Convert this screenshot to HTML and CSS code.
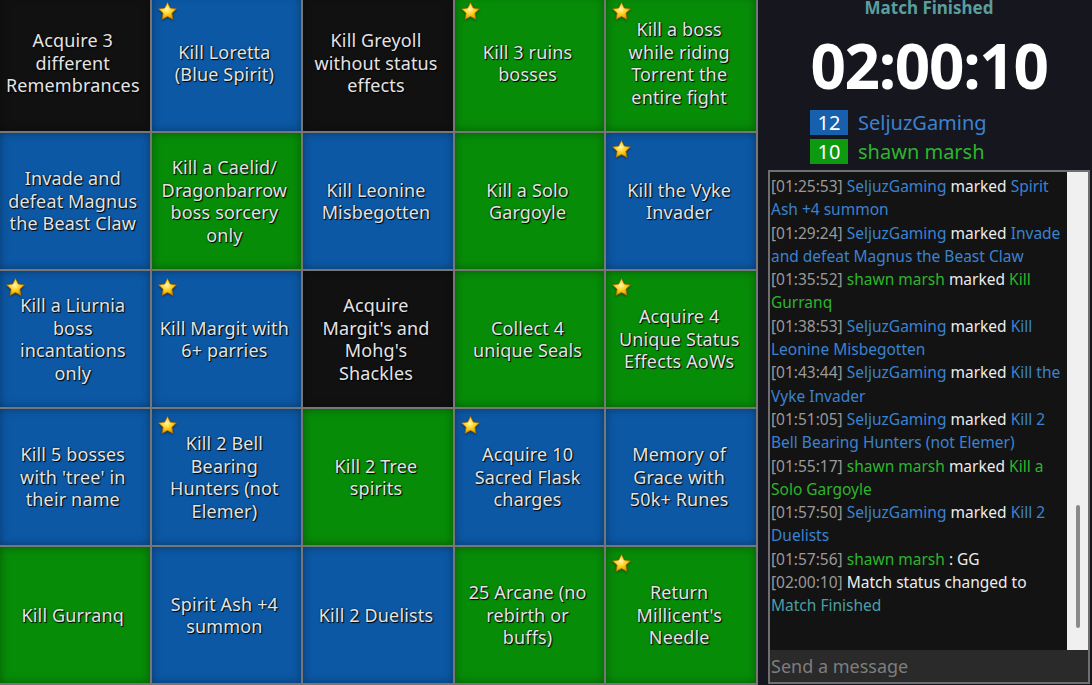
FILE: index.html
```html
<!DOCTYPE html>
<html>
<head>
<meta charset="utf-8">
<title>Bingo</title>
<link rel="stylesheet" href="styles.css">
</head>
<body>
<svg class="defs" width="0" height="0" aria-hidden="true">
  <defs>
    <radialGradient id="gold" cx="45%" cy="40%" r="65%">
      <stop offset="0" stop-color="#fff6b8"/>
      <stop offset="0.45" stop-color="#ffd11a"/>
      <stop offset="1" stop-color="#d98a00"/>
    </radialGradient>
    <path id="star" d="M12 1.6l3.1 6.5 7.1 1-5.2 4.9 1.3 7.1L12 17.7l-6.3 3.4 1.3-7.1-5.2-4.9 7.1-1z"/>
  </defs>
</svg>
<div class="page">
  <main class="board">
    <div class="cell black"><span>Acquire 3<br>different<br>Remembrances</span></div>
    <div class="cell blue"><svg class="star" viewBox="0 0 24 24"><use href="#star"/></svg><span>Kill Loretta<br>(Blue Spirit)</span></div>
    <div class="cell black"><span>Kill Greyoll<br>without status<br>effects</span></div>
    <div class="cell green"><svg class="star" viewBox="0 0 24 24"><use href="#star"/></svg><span>Kill 3 ruins<br>bosses</span></div>
    <div class="cell green"><svg class="star" viewBox="0 0 24 24"><use href="#star"/></svg><span>Kill a boss<br>while riding<br>Torrent the<br>entire fight</span></div>

    <div class="cell blue"><span>Invade and<br>defeat Magnus<br>the Beast Claw</span></div>
    <div class="cell green"><span>Kill a Caelid/<br>Dragonbarrow<br>boss sorcery<br>only</span></div>
    <div class="cell blue"><span>Kill Leonine<br>Misbegotten</span></div>
    <div class="cell green"><span>Kill a Solo<br>Gargoyle</span></div>
    <div class="cell blue"><svg class="star" viewBox="0 0 24 24"><use href="#star"/></svg><span>Kill the Vyke<br>Invader</span></div>

    <div class="cell blue"><svg class="star" viewBox="0 0 24 24"><use href="#star"/></svg><span>Kill a Liurnia<br>boss<br>incantations<br>only</span></div>
    <div class="cell blue"><svg class="star" viewBox="0 0 24 24"><use href="#star"/></svg><span>Kill Margit with<br>6+ parries</span></div>
    <div class="cell black"><span>Acquire<br>Margit's and<br>Mohg's<br>Shackles</span></div>
    <div class="cell green"><span>Collect 4<br>unique Seals</span></div>
    <div class="cell green"><svg class="star" viewBox="0 0 24 24"><use href="#star"/></svg><span>Acquire 4<br>Unique Status<br>Effects AoWs</span></div>

    <div class="cell blue"><span>Kill 5 bosses<br>with 'tree' in<br>their name</span></div>
    <div class="cell blue"><svg class="star" viewBox="0 0 24 24"><use href="#star"/></svg><span>Kill 2 Bell<br>Bearing<br>Hunters (not<br>Elemer)</span></div>
    <div class="cell green"><span>Kill 2 Tree<br>spirits</span></div>
    <div class="cell blue"><svg class="star" viewBox="0 0 24 24"><use href="#star"/></svg><span>Acquire 10<br>Sacred Flask<br>charges</span></div>
    <div class="cell blue"><span>Memory of<br>Grace with<br>50k+ Runes</span></div>

    <div class="cell green"><span>Kill Gurranq</span></div>
    <div class="cell blue"><span>Spirit Ash +4<br>summon</span></div>
    <div class="cell blue"><span>Kill 2 Duelists</span></div>
    <div class="cell green"><span>25 Arcane (no<br>rebirth or<br>buffs)</span></div>
    <div class="cell green"><svg class="star" viewBox="0 0 24 24"><use href="#star"/></svg><span>Return<br>Millicent's<br>Needle</span></div>
  </main>

  <aside class="sidebar">
    <div class="status">Match Finished</div>
    <div class="timer">02:00:10</div>
    <div class="scores">
      <div class="score"><span class="count c-blue">12</span><span class="name t-blue">SeljuzGaming</span></div>
      <div class="score"><span class="count c-green">10</span><span class="name t-green">shawn marsh</span></div>
    </div>
    <section class="chat">
      <div class="log">
        <div class="messages">
          <p><span class="ts">[01:25:53]</span> <span class="t-blue">SeljuzGaming</span> <span class="verb">marked</span> <span class="t-blue">Spirit Ash +4 summon</span></p>
          <p><span class="ts">[01:29:24]</span> <span class="t-blue">SeljuzGaming</span> <span class="verb">marked</span> <span class="t-blue">Invade and defeat Magnus the Beast Claw</span></p>
          <p><span class="ts">[01:35:52]</span> <span class="t-green">shawn marsh</span> <span class="verb">marked</span> <span class="t-green">Kill Gurranq</span></p>
          <p><span class="ts">[01:38:53]</span> <span class="t-blue">SeljuzGaming</span> <span class="verb">marked</span> <span class="t-blue">Kill Leonine Misbegotten</span></p>
          <p><span class="ts">[01:43:44]</span> <span class="t-blue">SeljuzGaming</span> <span class="verb">marked</span> <span class="t-blue">Kill the Vyke Invader</span></p>
          <p><span class="ts">[01:51:05]</span> <span class="t-blue">SeljuzGaming</span> <span class="verb">marked</span> <span class="t-blue">Kill 2 Bell Bearing Hunters (not Elemer)</span></p>
          <p><span class="ts">[01:55:17]</span> <span class="t-green">shawn marsh</span> <span class="verb">marked</span> <span class="t-green">Kill a Solo Gargoyle</span></p>
          <p><span class="ts">[01:57:50]</span> <span class="t-blue">SeljuzGaming</span> <span class="verb">marked</span> <span class="t-blue">Kill 2 Duelists</span></p>
          <p><span class="ts">[01:57:56]</span> <span class="t-green">shawn marsh</span> <span class="verb">: GG</span></p>
          <p><span class="ts">[02:00:10]</span> <span class="verb">Match status changed to</span> <span class="t-teal">Match Finished</span></p>
        </div>
        <div class="scrollbar"><div class="thumb"></div></div>
      </div>
      <input class="input" type="text" placeholder="Send a message">
    </section>
  </aside>
</div>
</body>
</html>
```

FILE: styles.css
```css
html, body {
  margin: 0;
  padding: 0;
  height: 100%;
  overflow: hidden;
}
body {
  background: #16161f;
  font-family: "Noto Sans", "Open Sans", sans-serif;
}
.defs {
  position: absolute;
  width: 0;
  height: 0;
}
.page {
  display: flex;
  height: 690px;
  margin-top: -5px;
}

/* board */
.board {
  width: 758px;
  flex: none;
  display: grid;
  grid-template-columns: repeat(5, 1fr);
  grid-auto-rows: 136px;
  gap: 2px;
  padding: 0 2px 2px 0;
  box-sizing: border-box;
  background: #767676;
}
.cell {
  position: relative;
  display: flex;
  align-items: center;
  justify-content: center;
  text-align: center;
  padding: 0 4px 0 0;
  color: #e4e4e4;
  font-size: 18px;
  line-height: 22.5px;
  letter-spacing: 0.15px;
  text-shadow: 1px 1px 1px #000, 0 0 2px rgba(0,0,0,0.6);
  box-shadow: inset 0 0 10px rgba(0,0,0,0.35);
  overflow: hidden;
}
.cell span {
  white-space: nowrap;
}
.black { background: #111111; }
.blue { background: #0c58a5; }
.green { background: #078c08; }
.star {
  position: absolute;
  top: 6px;
  left: 5px;
  width: 21px;
  height: 21px;
  fill: url(#gold);
  stroke: #a86a00;
  stroke-width: 0.8;
  stroke-linejoin: round;
  filter: drop-shadow(0 1px 1px rgba(0,0,0,0.45));
}

/* sidebar */
.sidebar {
  flex: 1;
  min-width: 0;
  display: flex;
  flex-direction: column;
  padding: 1px 2px 1px 10px;
}
.status {
  text-align: center;
  color: #5a9e9d;
  font-weight: 700;
  font-size: 17px;
  line-height: 23px;
}
.timer {
  margin-top: 15px;
  text-align: center;
  color: #ffffff;
  font-weight: 700;
  font-size: 62px;
  line-height: 62px;
  letter-spacing: -1.3px;
}
.scores {
  margin: 14px 0 0 42px;
  display: flex;
  flex-direction: column;
  gap: 4px;
}
.score {
  display: flex;
  align-items: center;
  height: 25px;
  font-size: 20px;
}
.count {
  width: 38px;
  height: 25px;
  line-height: 25px;
  text-align: center;
  color: #fff;
}
.c-blue { background: #1760ad; }
.c-green { background: #0e9a10; }
.name {
  margin-left: 10px;
  line-height: 25px;
}
.t-blue { color: #3b82cf; }
.t-green { color: #2db52d; }
.t-teal { color: #4e9ea6; }

/* chat */
.chat {
  margin-top: 6px;
  flex: 1;
  min-height: 0;
  display: flex;
  flex-direction: column;
  border: 2px solid #6f6f6f;
  background: #131313;
}
.log {
  flex: 1;
  min-height: 0;
  display: flex;
}
.messages {
  flex: 1;
  min-width: 0;
  padding: 3px 0 0 1px;
  overflow: hidden;
  font-size: 15.5px;
  line-height: 23.3px;
}
.messages p {
  margin: 0;
}
.ts { color: #9a9a9a; }
.verb { color: #ececec; }
.scrollbar {
  width: 21px;
  flex: none;
  background: #f0f0f0;
  display: flex;
  flex-direction: column;
  justify-content: flex-end;
  align-items: center;
  padding-bottom: 22px;
  box-sizing: border-box;
}
.thumb {
  width: 4px;
  height: 123px;
  border-radius: 2px;
  background: #8a8a8a;
}
.input {
  height: 32px;
  flex: none;
  box-sizing: border-box;
  border: none;
  outline: none;
  margin: 0;
  padding: 0 1px;
  background: #2a2a2a;
  color: #ddd;
  font-family: "Noto Sans", "Open Sans", sans-serif;
  font-size: 18px;
}
.input::placeholder {
  color: #7e7e7e;
}
```
